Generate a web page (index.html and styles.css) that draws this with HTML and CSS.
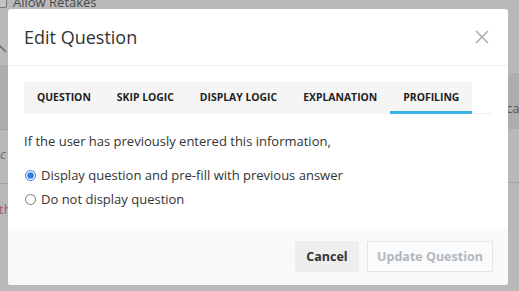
FILE: index.html
```html
<!DOCTYPE HTML>
<html>

<head>
<meta charset="utf-8">
<title>Edit Question</title>

<link rel="stylesheet" href="styles.css">
</head>

<body>

<div class="page">
  <div class="retakes"><span class="box"></span>Allow Retakes</div>
  <div class="page-cols">
    <div class="col-left">
      <svg class="chev" width="10" height="12" viewBox="0 0 10 12"><path d="M-2 1 L6 9" stroke="#707070" stroke-width="1.6" fill="none"/></svg>
      <div class="band band-left"></div>
      <div class="row-left"><span class="ghost">c</span></div>
      <div class="row-left pink">th</div>
    </div>
    <div class="col-right">
      <div class="band band-right"><span class="ghost-r">ca</span></div>
      <div class="row-right"></div>
    </div>
  </div>
</div>

<div class="modal">
  <div class="modal-header">
    <h4 class="modal-title">Edit Question</h4>
    <button type="button" class="close">
      <svg width="14" height="14" viewBox="0 0 14 14"><path d="M1 1 L13 13 M13 1 L1 13" stroke="#a7aeae" stroke-width="1.6" fill="none"/></svg>
    </button>
  </div>

  <div class="modal-body">
    <ul class="tabs">
      <li>Question</li>
      <li>Skip Logic</li>
      <li>Display Logic</li>
      <li>Explanation</li>
      <li class="active">Profiling</li>
    </ul>

    <p class="lead">If the user has previously entered this information,</p>

    <label class="radio"><input type="radio" name="prefill" checked> Display question and pre-fill with previous answer</label>
    <label class="radio"><input type="radio" name="prefill"> Do not display question</label>
  </div>

  <div class="modal-footer">
    <button type="button" class="btn btn-cancel">Cancel</button>
    <button type="button" class="btn btn-update" disabled>Update Question</button>
  </div>
</div>

</body>
</html>
```

FILE: styles.css
```css
body {
  margin: 0;
  background: #b9b9b9;
  font-family: "Open Sans", "Liberation Sans", sans-serif;
  color: #333;
  overflow: hidden;
}

/* страница под модалкой */

.page {
  height: 291px;
}

.retakes {
  margin-top: -7px;
  height: 18px;
  font-size: 13px;
  line-height: 18px;
  color: #4a4a4a;
  display: flex;
  align-items: center;
}

.retakes .box {
  width: 10px;
  height: 10px;
  border: 1px solid #777;
  border-radius: 2px;
  margin: 0 6px 0 -5px;
  background: #c4c4c4;
}

.page-cols {
  display: flex;
  justify-content: space-between;
}

.col-left {
  width: 8px;
}

.col-right {
  width: 11px;
}

.chev {
  display: block;
  margin-top: 32px;
}

.band {
  background: #adadad;
}

.band-left {
  margin-top: 10px;
  height: 64px;
  border-bottom: 1px solid #a2a2a2;
}

.row-left {
  height: 53px;
  border-bottom: 1px solid #a2a2a2;
  font-size: 13px;
  line-height: 48px;
  color: #6e6e6e;
}

.ghost {
  font-style: italic;
}

.pink {
  border: 0;
  color: #b14d86;
  line-height: 50px;
  margin-left: -1px;
}

.band-right {
  margin-top: 62px;
  height: 56px;
  font-size: 13px;
  line-height: 70px;
  color: #555;
}

.ghost-r {
  margin-left: -2px;
}

.row-right {
  height: 53px;
  border-bottom: 1px solid #a2a2a2;
}

/* модалка */

.modal {
  position: absolute;
  left: 8px;
  top: 9px;
  width: 500px;
  height: 276px;
  background: #fff;
  border-radius: 3px;
  overflow: hidden;
  display: flex;
  flex-direction: column;
}

.modal-header {
  height: 56px;
  padding: 0 16px;
  border-bottom: 1px solid #eeeff0;
  display: flex;
  align-items: center;
  justify-content: space-between;
}

.modal-title {
  margin: 0;
  font-size: 18px;
  font-weight: normal;
  color: #333;
}

.close {
  border: 0;
  background: none;
  padding: 0;
  margin-right: 3px;
  display: flex;
}

.modal-body {
  flex: 1;
  padding: 16px 16px 0;
}

.tabs {
  list-style: none;
  margin: 0;
  padding: 0;
  display: flex;
  border-bottom: 1px solid #eef0f1;
}

.tabs li {
  background: #f5f5f5;
  height: 32px;
  padding: 0 13px;
  font-size: 10.4px;
  font-weight: bold;
  line-height: 31px;
  text-transform: uppercase;
  color: #1e1e1e;
  box-sizing: border-box;
  margin-bottom: -1px;
}

.tabs li.active {
  border-bottom: 3px solid #3ab4e8;
  line-height: 30px;
}

.lead {
  margin: 17px 0 12px;
  font-size: 13px;
  line-height: 20px;
}

.radio {
  display: flex;
  align-items: center;
  height: 24px;
  font-size: 13px;
}

.radio input {
  margin: 0 5px 0 1px;
  width: 11px;
  height: 11px;
  accent-color: #2f7fe0;
}

.modal-footer {
  background: #f8f9fa;
  height: 56px;
  padding: 12px 15px 0 0;
  box-sizing: border-box;
  display: flex;
  justify-content: flex-end;
  align-items: flex-start;
  gap: 8px;
}

.btn {
  height: 31px;
  border-radius: 2px;
  font-family: inherit;
  font-size: 12.5px;
  font-weight: bold;
  padding: 0;
  white-space: nowrap;
}

.btn-cancel {
  width: 64px;
  background: #eeeeee;
  border: 1px solid #eeeeee;
  color: #333;
}

.btn-update {
  width: 126px;
  background: #fafbfc;
  border: 1px solid #e4e6e8;
  color: #b3b8bc;
}
```
